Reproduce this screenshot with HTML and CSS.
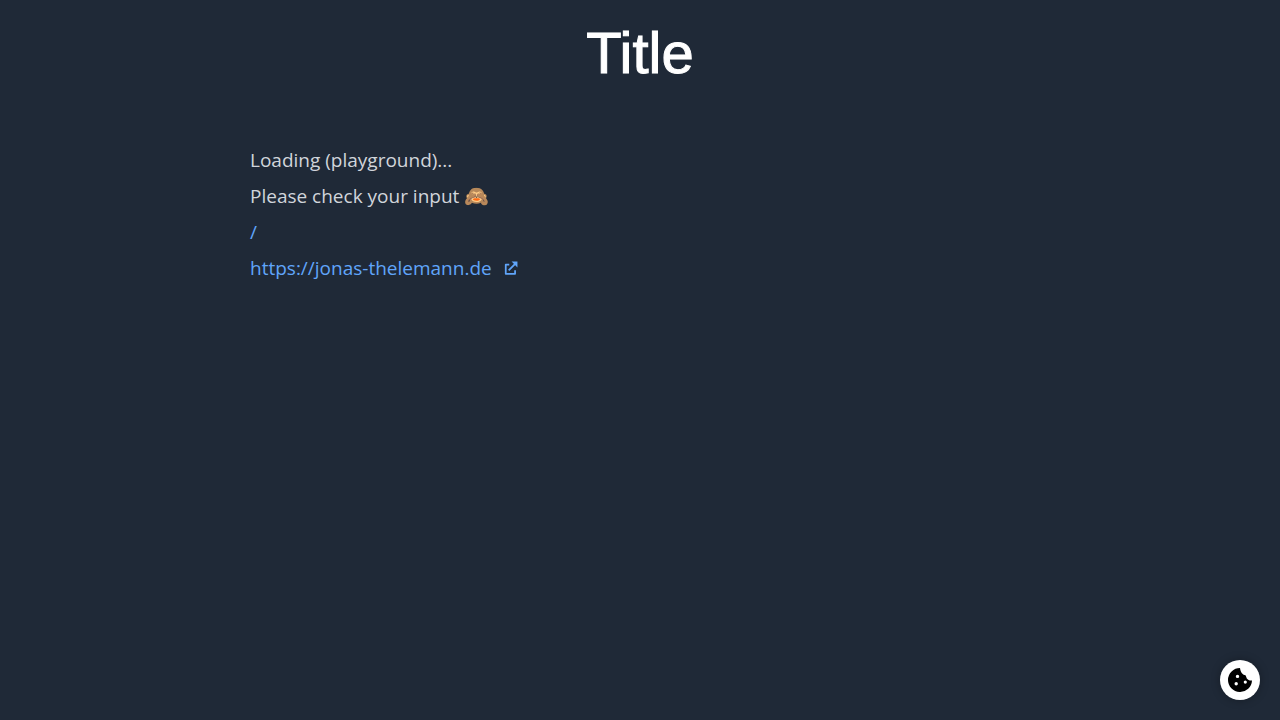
FILE: index.html
```html
<!DOCTYPE html>
<html lang="en">
<head>
<meta charset="utf-8">
<meta name="viewport" content="width=device-width, initial-scale=1">
<title>Title</title>
<link rel="stylesheet" href="styles.css">
</head>
<body>
<main class="page">
  <h1 class="title">Title</h1>
  <div class="content">
    <div>Loading (playground)...</div>
    <div>Please check your input <span class="emoji">🙈</span></div>
    <div><a class="link" href="/">/</a></div>
    <div><a class="link external" href="https://jonas-thelemann.de">https://jonas-thelemann.de<svg class="external-icon" viewBox="0 0 24 24" fill="none" stroke="currentColor" stroke-width="3" stroke-linejoin="round" aria-hidden="true"><path d="M9 6H3v16h16v-6M8 16L20 4"/><path d="M13 1h10v10z" fill="currentColor" stroke="none"/></svg></a></div>
  </div>
</main>
<button class="cookie-button" type="button" aria-label="Cookie control">
  <svg class="cookie-icon" viewBox="0 0 24 24" aria-hidden="true"><path fill="currentColor" fill-rule="evenodd" d="M12 0A12 12 0 1 0 24 12.500c-2.400.2-4.200-.6-5.200-2-.3-.9-.7-2.200-1.300-3.200-2.600-.3-5-2.700-5.500-7.300ZM9.500 6.700a1.700 1.700 0 1 1 0 3.400 1.700 1.700 0 0 1 0-3.400ZM17.300 12.500a1.600 1.600 0 1 1 0 3.200 1.600 1.600 0 0 1 0-3.200ZM8.200 14a1.700 1.700 0 1 1 0 3.400 1.700 1.700 0 0 1 0-3.400Z"/></svg>
</button>
</body>
</html>
```
FILE: styles.css
```css
body {
  margin: 0;
  background: #1f2937;
  color: #d1d5db;
  font-family: "Open Sans", "Noto Color Emoji", sans-serif;
}

.page {
  padding: 20px;
}

.title {
  margin: 0 0 56px;
  color: #fff;
  font-family: "Liberation Sans", sans-serif;
  font-size: 58px;
  font-weight: 400;
  line-height: 66px;
  text-align: center;
  -webkit-text-stroke: 1px #fff;
}

.content {
  max-width: 780px;
  margin: 0 auto;
  font-size: 19px;
  line-height: 36px;
}

.emoji {
  font-size: 20px;
  line-height: 20px;
}

.link {
  color: #60a5fa;
  text-decoration: none;
}

.external {
  display: inline-flex;
  align-items: center;
  gap: 12px;
}

.external-icon {
  width: 14px;
  height: 14px;
}

.cookie-button {
  position: fixed;
  right: 20px;
  bottom: 20px;
  display: flex;
  align-items: center;
  justify-content: center;
  width: 40px;
  height: 40px;
  padding: 0;
  border: 0;
  border-radius: 50%;
  background: #fff;
  color: #000;
  box-shadow: 0 0 10px rgba(0, 0, 0, 0.3);
  cursor: pointer;
}

.cookie-icon {
  width: 24px;
  height: 24px;
}
```
